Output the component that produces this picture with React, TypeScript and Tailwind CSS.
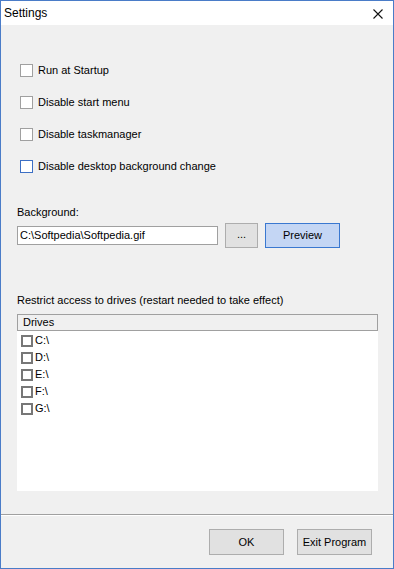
import React from "react";

const options = [
  "Run at Startup",
  "Disable start menu",
  "Disable taskmanager",
  "Disable desktop background change",
];

const drives = ["C:\\", "D:\\", "E:\\", "F:\\", "G:\\"];

export default function App() {
  return (
    <div
      className="flex h-[569px] w-[394px] flex-col border border-[#4a7cc8] bg-[#f0f0f0] text-[11px] text-black"
      style={{ fontFamily: '"Liberation Sans", Arial, sans-serif' }}
    >
      <div className="flex h-[24px] shrink-0 items-center justify-between bg-white pl-[3px] pr-[10px]">
        <span className="text-[12px]">Settings</span>
        <svg width="10" height="10" viewBox="0 0 10 10" className="mt-[1px]">
          <path d="M0.5 0.5 L9.5 9.5 M9.5 0.5 L0.5 9.5" stroke="#111" strokeWidth="1.1" />
        </svg>
      </div>

      <div className="flex flex-1 flex-col pl-[16px] pr-[15px]">
        <div className="mt-[29px] flex flex-col">
          {options.map((o, i) => (
            <div key={o} className="flex h-[32px] items-center gap-[5px] pl-[3px]">
              <span
                className={
                  "h-[13px] w-[13px] border bg-white " +
                  (i === 3 ? "border-[#3c6fc4]" : "border-[#a0a0a0]")
                }
              />
              <span>{o}</span>
            </div>
          ))}
        </div>

        <div className="mt-[23px] leading-[14px]">Background:</div>
        <div className="mt-[4px] flex items-center">
          <div className="flex h-[19px] w-[201px] items-center border border-[#a0a0a0] bg-white pl-[2px]">
            C:\Softpedia\Softpedia.gif
          </div>
          <div className="ml-[7px] flex h-[25px] w-[33px] items-center justify-center border border-[#adadad] bg-[#e1e1e1] pb-[2px]">
            ...
          </div>
          <div className="ml-[7px] flex h-[25px] w-[75px] items-center justify-center border border-[#3a78d0] bg-[#c4d6f4]">
            Preview
          </div>
        </div>

        <div className="mt-[45px] leading-[14px]">Restrict access to drives (restart needed to take effect)</div>
        <div className="mt-[7px] flex h-[177px] w-[361px] flex-col bg-white">
          <div className="flex h-[17px] items-center border border-[#a0a0a0] bg-[#f0f0f0] pl-[5px]">Drives</div>
          <div className="mt-[1px] flex flex-col">
            {drives.map((d) => (
              <div key={d} className="flex h-[17px] items-center gap-[2px] pl-[4px]">
                <span className="h-[12px] w-[12px] border-2 border-[#777777] bg-white" />
                <span>{d}</span>
              </div>
            ))}
          </div>
        </div>
      </div>

      <div className="h-[1px] shrink-0 bg-[#a0a0a0]" />
      <div className="h-[1px] shrink-0 bg-white" />
      <div className="flex h-[52px] shrink-0 items-start justify-end gap-[13px] pr-[21px] pt-[13px]">
        <div className="flex h-[26px] w-[75px] items-center justify-center border border-[#adadad] bg-[#e1e1e1]">
          OK
        </div>
        <div className="flex h-[26px] w-[75px] items-center justify-center border border-[#adadad] bg-[#e1e1e1]">
          Exit Program
        </div>
      </div>
    </div>
  );
}
